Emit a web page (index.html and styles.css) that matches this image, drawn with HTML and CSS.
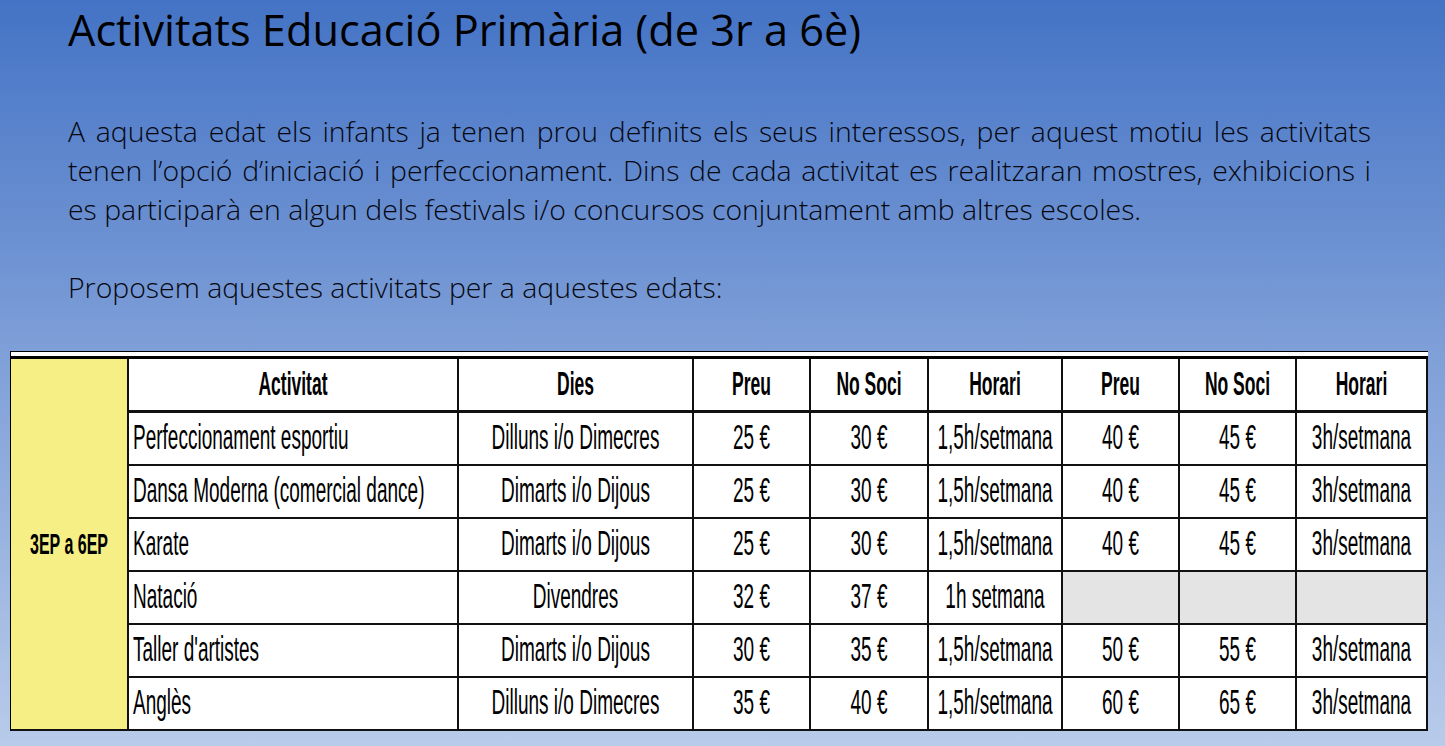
FILE: index.html
```html
<!DOCTYPE html>
<html lang="ca">
<head>
<meta charset="utf-8">
<title>Activitats Educació Primària</title>
<link rel="stylesheet" href="styles.css">
</head>
<body>
<main class="page">
  <header class="intro">
    <h1 class="title">Activitats Educació Primària (de 3r a 6è)</h1>
    <p class="text">A aquesta edat els infants ja tenen prou definits els seus interessos, per aquest motiu les activitats tenen l’opció d’iniciació i perfeccionament. Dins de cada activitat es realitzaran mostres, exhibicions i es participarà en algun dels festivals i/o concursos conjuntament amb altres escoles.</p>
    <p class="text">Proposem aquestes activitats per a aquestes edats:</p>
  </header>
  <section class="sheet">
    <table class="grid">
      <colgroup>
        <col class="c-age"><col class="c-act"><col class="c-days"><col class="c-pr"><col class="c-ns"><col class="c-hr"><col class="c-pr"><col class="c-ns2"><col class="c-hr2">
      </colgroup>
      <tbody>
        <tr class="head">
          <td class="age" rowspan="7"><span class="t b">3EP a 6EP</span></td>
          <th><span class="t">Activitat</span></th>
          <th><span class="t">Dies</span></th>
          <th><span class="t">Preu</span></th>
          <th><span class="t">No Soci</span></th>
          <th><span class="t">Horari</span></th>
          <th><span class="t">Preu</span></th>
          <th><span class="t">No Soci</span></th>
          <th><span class="t">Horari</span></th>
        </tr>
        <tr>
          <td class="name"><span class="t">Perfeccionament esportiu</span></td>
          <td><span class="t">Dilluns i/o Dimecres</span></td>
          <td><span class="t">25 €</span></td>
          <td><span class="t">30 €</span></td>
          <td><span class="t">1,5h/setmana</span></td>
          <td><span class="t">40 €</span></td>
          <td><span class="t">45 €</span></td>
          <td><span class="t">3h/setmana</span></td>
        </tr>
        <tr>
          <td class="name"><span class="t">Dansa Moderna (comercial dance)</span></td>
          <td><span class="t">Dimarts i/o Dijous</span></td>
          <td><span class="t">25 €</span></td>
          <td><span class="t">30 €</span></td>
          <td><span class="t">1,5h/setmana</span></td>
          <td><span class="t">40 €</span></td>
          <td><span class="t">45 €</span></td>
          <td><span class="t">3h/setmana</span></td>
        </tr>
        <tr>
          <td class="name"><span class="t">Karate</span></td>
          <td><span class="t">Dimarts i/o Dijous</span></td>
          <td><span class="t">25 €</span></td>
          <td><span class="t">30 €</span></td>
          <td><span class="t">1,5h/setmana</span></td>
          <td><span class="t">40 €</span></td>
          <td><span class="t">45 €</span></td>
          <td><span class="t">3h/setmana</span></td>
        </tr>
        <tr>
          <td class="name"><span class="t">Natació</span></td>
          <td><span class="t">Divendres</span></td>
          <td><span class="t">32 €</span></td>
          <td><span class="t">37 €</span></td>
          <td><span class="t">1h setmana</span></td>
          <td class="empty"></td>
          <td class="empty"></td>
          <td class="empty"></td>
        </tr>
        <tr>
          <td class="name"><span class="t">Taller d'artistes</span></td>
          <td><span class="t">Dimarts i/o Dijous</span></td>
          <td><span class="t">30 €</span></td>
          <td><span class="t">35 €</span></td>
          <td><span class="t">1,5h/setmana</span></td>
          <td><span class="t">50 €</span></td>
          <td><span class="t">55 €</span></td>
          <td><span class="t">3h/setmana</span></td>
        </tr>
        <tr>
          <td class="name"><span class="t">Anglès</span></td>
          <td><span class="t">Dilluns i/o Dimecres</span></td>
          <td><span class="t">35 €</span></td>
          <td><span class="t">40 €</span></td>
          <td><span class="t">1,5h/setmana</span></td>
          <td><span class="t">60 €</span></td>
          <td><span class="t">65 €</span></td>
          <td><span class="t">3h/setmana</span></td>
        </tr>
      </tbody>
    </table>
  </section>
</main>
</body>
</html>
```
FILE: styles.css
```css
html, body {
  margin: 0;
  padding: 0;
}
body {
  width: 1445px;
  height: 746px;
  overflow: hidden;
  background: linear-gradient(180deg, #4473c5 0%, #7c9dd7 45%, #b8cbea 100%);
  font-family: "Open Sans", "Liberation Sans", sans-serif;
  color: #000;
}
.page {
  display: flex;
  flex-direction: column;
}
.intro {
  padding: 0 74px 0 68px;
}
.title {
  margin: 0;
  padding-top: 2px;
  font-family: "Open Sans", sans-serif;
  font-weight: 400;
  font-size: 43.3px;
  line-height: 56px;
  color: #000;
}
.text {
  margin: 54px 0 0;
  font-family: "Open Sans", sans-serif;
  font-weight: 300;
  font-size: 28.4px;
  line-height: 39px;
  text-align: justify;
  color: #05070f;
}
.text + .text {
  margin-top: 39px;
}
.sheet {
  margin: 44px 0 0 10px;
  width: 1417px;
  background: #fff;
  border-top: 1px solid #000;
  border-left: 1px solid #000;
  padding-top: 4px;
}
.grid {
  width: 1417px;
  table-layout: fixed;
  border-collapse: collapse;
  border-top: 3px solid #000;
  border-bottom: 2px solid #000;
  border-right: 2px solid #000;
  font-family: "Liberation Sans", Arial, sans-serif;
  font-size: 19px;
  color: #000;
}
.c-age { width: 117px; }
.c-act { width: 330px; }
.c-days { width: 235px; }
.c-pr { width: 117px; }
.c-ns { width: 118px; }
.c-hr { width: 134px; }
.c-ns2 { width: 117px; }
.c-hr2 { width: 131px; }
.grid th,
.grid td {
  border: 2px solid #111;
  padding: 0;
  text-align: center;
  vertical-align: middle;
  height: 51px;
  overflow: visible;
}
.grid th {
  font-weight: 700;
  font-size: 17.5px;
  border-bottom-width: 3px;
}
.grid .age {
  background: #f5ef86;
  border-left: 0;
}
.grid .name {
  text-align: left;
  padding-left: 4px;
}
.grid .empty {
  background: #e4e4e4;
}
.t {
  display: inline-block;
  white-space: nowrap;
  line-height: 20px;
  transform: scaleY(1.82);
  transform-origin: 50% 55%;
}
.grid th .t,
.t.b {
  font-weight: 700;
  transform: scaleY(1.9);
}
.t.b {
  font-size: 16px;
}
```
